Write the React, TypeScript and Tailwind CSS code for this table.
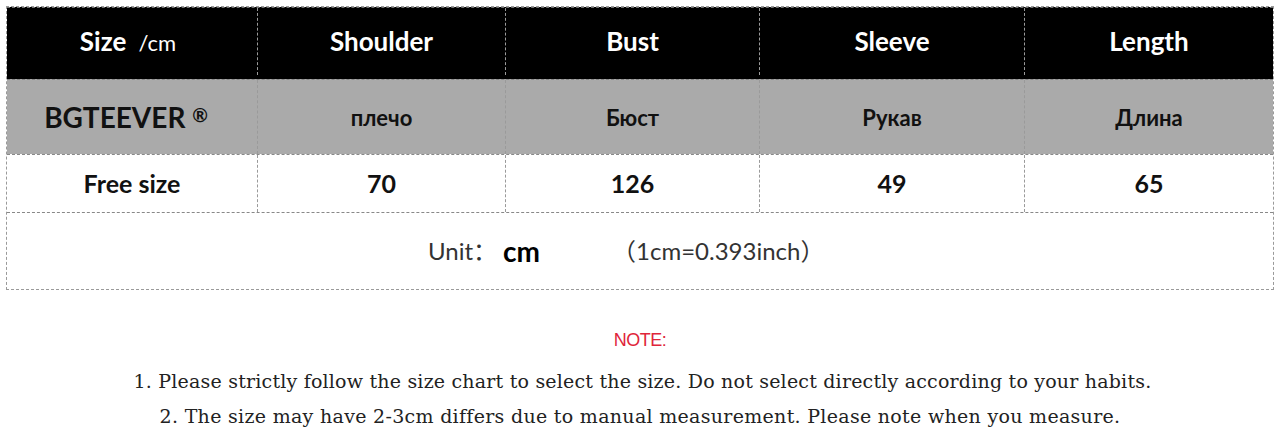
const cols = ["w-[250px]", "w-[248px]", "w-[254px]", "w-[265px]", "flex-1"];

const Row = ({
  cells,
  className,
  textClass,
  first,
}: {
  cells: React.ReactNode[];
  className: string;
  textClass: string;
  first?: React.ReactNode;
}) => (
  <div className={`flex ${className}`}>
    {cells.map((c, i) => (
      <div
        key={i}
        className={`${cols[i]} flex items-center justify-center ${textClass} ${
          i > 0 ? "border-l border-dashed border-[#9a9a9a]" : ""
        }`}
      >
        {i === 0 && first ? first : c}
      </div>
    ))}
  </div>
);

export default function App() {
  return (
    <div className="w-[1280px] h-[432px] bg-white pt-[6px] px-[6px]" style={{ fontFamily: "Lato, 'Open Sans', sans-serif" }}>
      <div className="w-[1268px] border border-dashed border-[#9a9a9a]">
        <Row
          className="h-[72px] bg-black border-t border-dashed border-[#777] pb-[4px]"
          textClass="text-white font-bold text-[26px]"
          cells={["", "Shoulder", "Bust", "Sleeve", "Length"]}
          first={
            <span className="pr-[8px]">
              Size <span className="text-[22px] font-normal ml-[6px]">/cm</span>
            </span>
          }
        />
        <Row
          className="h-[75px] bg-[#aaaaaa] border-t border-dashed border-[#888]"
          textClass="text-[#111] font-bold text-[22px]"
          cells={["", "плечо", "Бюст", "Рукав", "Длина"]}
          first={
            <span className="text-[28px] text-[#111] pr-[12px]">
              BGTEEVER <span className="text-[19px] align-[6px]">®</span>
            </span>
          }
        />
        <Row
          className="h-[58px] bg-white border-t border-dashed border-[#888]"
          textClass="text-[#111] font-bold text-[25px]"
          cells={["Free size", "70", "126", "49", "65"]}
        />
        <div
          className="h-[77px] flex items-center border-t border-dashed border-[#888] text-[#333]"
          style={{ fontFamily: "Lato, 'Noto Sans CJK SC', sans-serif" }}
        >
          <span className="ml-[421px] text-[24px]">Unit：</span>
          <span className="ml-[6px] text-[28px] font-bold text-black">cm</span>
          <span className="ml-[72px] text-[24px]">（1cm=0.393inch）</span>
        </div>
      </div>

      <div className="flex flex-col items-center mt-[40px]" style={{ fontFamily: "'DejaVu Serif', serif" }}>
        <div className="text-[18px] text-[#e0253a] leading-[20px] tracking-[-0.5px]" style={{ fontFamily: "'Liberation Sans', sans-serif" }}>
          NOTE:
        </div>
        <div className="mt-[19px] text-[19px] text-[#222] leading-[24px] tracking-[0.2px] pl-[5px]">
          1. Please strictly follow the size chart to select the size. Do not select directly according to your habits.
        </div>
        <div className="mt-[11px] text-[19px] text-[#222] leading-[24px] tracking-[0.3px]">
          2. The size may have 2-3cm differs due to manual measurement. Please note when you measure.
        </div>
      </div>
    </div>
  );
}
